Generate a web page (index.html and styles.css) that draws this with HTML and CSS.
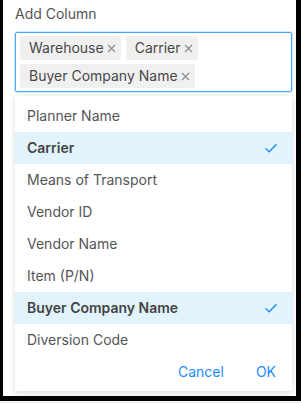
FILE: index.html
```html
<!DOCTYPE html>
<html>
<head lang="en">
    <meta charset="UTF-8">
    <title>Add Column</title>
    <link rel="stylesheet" href="styles.css">
</head>
<body>
<div class="frame">
    <div class="panel">
        <div class="label">Add Column</div>
        <div class="select">
            <span class="tag">Warehouse<svg class="close" width="9" height="9" viewBox="0 0 9 9"><path d="M1 1 L8 8 M8 1 L1 8" stroke="#8a8a8a" stroke-width="1.1"/></svg></span>
            <span class="tag">Carrier<svg class="close" width="9" height="9" viewBox="0 0 9 9"><path d="M1 1 L8 8 M8 1 L1 8" stroke="#8a8a8a" stroke-width="1.1"/></svg></span>
            <span class="tag">Buyer Company Name<svg class="close" width="9" height="9" viewBox="0 0 9 9"><path d="M1 1 L8 8 M8 1 L1 8" stroke="#8a8a8a" stroke-width="1.1"/></svg></span>
        </div>
        <div class="dropdown">
            <ul class="options">
                <li>Planner Name</li>
                <li class="selected">Carrier
                    <svg class="check" width="14" height="14" viewBox="0 0 14 14"><path d="M1.5 7.2 L5.2 10.8 L12.5 3.2" fill="none" stroke="#1a8cff" stroke-width="1.3"/></svg>
                </li>
                <li>Means of Transport</li>
                <li>Vendor ID</li>
                <li>Vendor Name</li>
                <li>Item (P/N)</li>
                <li class="selected">Buyer Company Name
                    <svg class="check" width="14" height="14" viewBox="0 0 14 14"><path d="M1.5 7.2 L5.2 10.8 L12.5 3.2" fill="none" stroke="#1a8cff" stroke-width="1.3"/></svg>
                </li>
                <li>Diversion Code</li>
            </ul>
            <div class="actions">
                <span class="btn">Cancel</span>
                <span class="btn">OK</span>
            </div>
        </div>
    </div>
</div>
</body>
</html>
```

FILE: styles.css
```css
*{
    margin: 0;
    padding: 0;
    box-sizing: border-box;
}
ul{
    list-style: none;
}
body{
    background: #f2f2f2;
    font-family: Inter, "Noto Sans", sans-serif;
    font-size: 14px;
}
.frame{
    background: #000;
    height: 401px;
    padding: 0 5px 5px 3px;
}
.panel{
    background: #fff;
    height: 396px;
    padding: 4px 4px 0 12px;
}
.label{
    color: #555;
    line-height: 20px;
    height: 28px;
}
.select{
    border: 1px solid #4aa3f5;
    box-shadow: 0 0 0 1px rgba(74,163,245,.25);
    border-radius: 2px;
    height: 60px;
    padding: 3px 4px;
    display: flex;
    flex-wrap: wrap;
    align-content: flex-start;
    gap: 4px 5px;
}
.tag{
    background: #f0f0f0;
    border-radius: 2px;
    color: #484848;
    height: 24px;
    line-height: 24px;
    padding: 0 5px 0 9px;
    display: flex;
    align-items: center;
}
.close{
    margin-left: 3px;
}
.dropdown{
    margin-top: 4px;
    background: #fff;
    box-shadow: 0 2px 6px rgba(0,0,0,.15);
    padding: 4px 0 0;
    height: 295px;
}
.options li{
    height: 32px;
    line-height: 32px;
    padding: 0 14px 0 12px;
    color: #555;
    display: flex;
    justify-content: space-between;
    align-items: center;
}
.options .selected{
    background: #e2f3fc;
    font-weight: 600;
    color: #444;
}
.actions{
    display: flex;
    justify-content: flex-end;
    gap: 32px;
    padding: 6px 16px 0 0;
    line-height: 20px;
}
.btn{
    color: #1a8cff;
    cursor: pointer;
}
```
